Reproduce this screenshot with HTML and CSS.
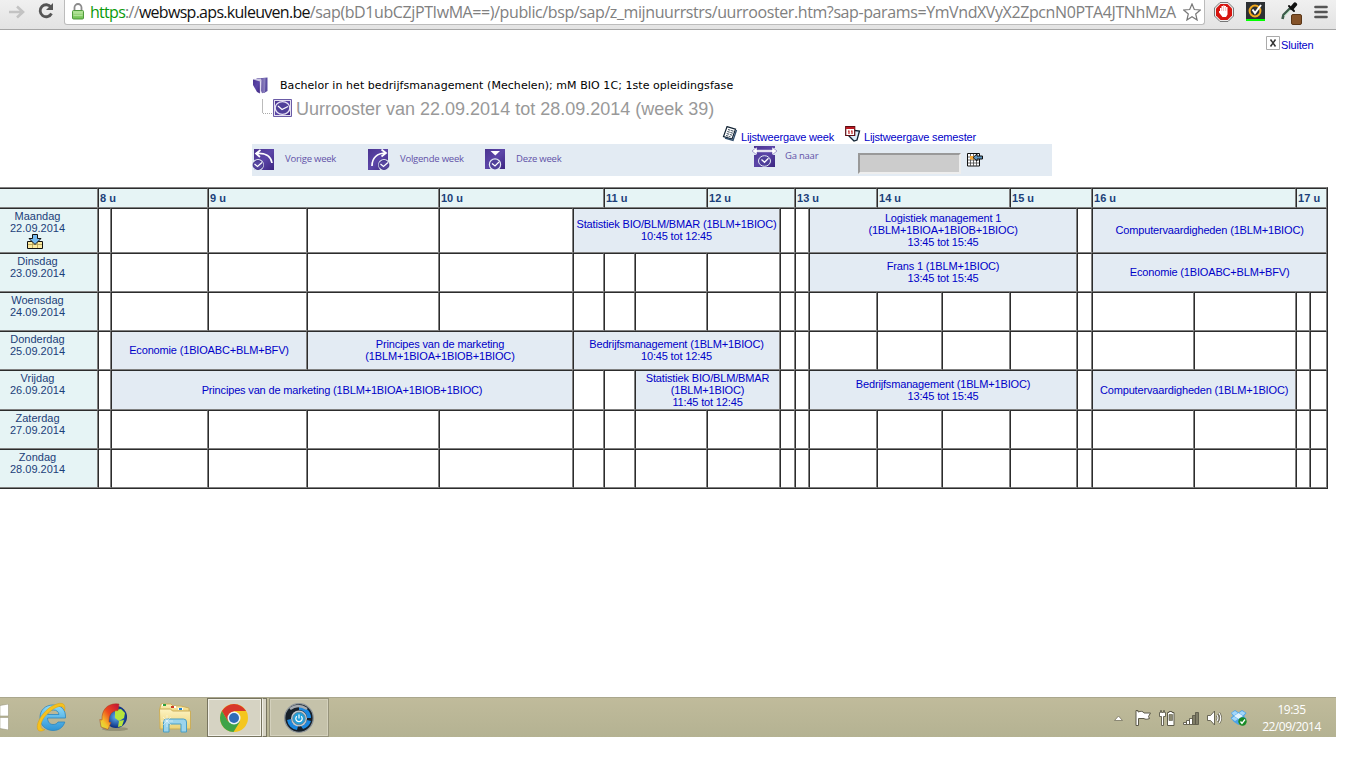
FILE: index.html
```html
<!DOCTYPE html>
<html lang="nl">
<head>
<meta charset="utf-8">
<title>Uurrooster</title>
<link rel="stylesheet" href="styles.css">
</head>
<body>
<svg class="defs" width="0" height="0" aria-hidden="true">
  <defs>
    <linearGradient id="purple" x1="0" y1="0" x2="1" y2="1"><stop offset="0" stop-color="#4a3390"/><stop offset=".5" stop-color="#5c46a8"/><stop offset="1" stop-color="#3c2580"/></linearGradient>
    <linearGradient id="spine" x1="0" y1="0" x2="1" y2="0"><stop offset="0" stop-color="#3f2b86"/><stop offset="1" stop-color="#9389c4"/></linearGradient>
    <linearGradient id="sky" x1="0" y1="0" x2="0" y2="1"><stop offset="0" stop-color="#8fdcfa"/><stop offset="1" stop-color="#2d94d6"/></linearGradient>
    <linearGradient id="paper" x1="0" y1="0" x2="0" y2="1"><stop offset="0" stop-color="#fdf3c1"/><stop offset="1" stop-color="#ecd277"/></linearGradient>
    <radialGradient id="globe"><stop offset="0" stop-color="#5db0f0"/><stop offset="1" stop-color="#0b2d80"/></radialGradient>
    <linearGradient id="swoosh" x1="1" y1="0" x2="0" y2="1"><stop offset="0" stop-color="#c2103a"/><stop offset=".45" stop-color="#ee4a1c"/><stop offset=".75" stop-color="#f5c32c"/><stop offset="1" stop-color="#c8ee4c"/></linearGradient>
    <linearGradient id="lockfill" x1="0" y1="0" x2="0" y2="1"><stop offset="0" stop-color="#b6e59a"/><stop offset="1" stop-color="#6cc04e"/></linearGradient>
  </defs>
</svg>

<header class="browser">
  <svg class="forward" width="18" height="16" viewBox="0 0 18 16"><path d="M0 8h13M8 2.500l6 5.500-6 5.500" fill="none" stroke="#c3c3c3" stroke-width="2.600"/></svg>
  <svg class="reload" width="18" height="18" viewBox="0 0 18 18"><path d="M14 5.200A6 6 0 1 0 14.500 11.500" fill="none" stroke="#555" stroke-width="2.800"/><path d="M16 1v7H9z" fill="#555"/></svg>
  <div class="omnibox">
    <svg class="lock" width="12" height="17" viewBox="0 0 12 17"><path d="M2.500 8V4.500a3.500 3.500 0 0 1 7 0V8" fill="none" stroke="#8b8b8b" stroke-width="1.800"/><rect x=".5" y="7.500" width="11" height="8.500" rx="1" fill="url(#lockfill)" stroke="#4f9a3c"/><path d="M1.500 10h9M1.500 12.500h9" stroke="#c9efb5" stroke-width=".6"/></svg>
    <span class="url"><span class="origin"><span class="scheme">https</span>://<span class="host">webwsp.aps.kuleuven.be</span></span>/sap(bD1ubCZjPTIwMA==)/public/bsp/sap/z_mijnuurrstrs/uurrooster.htm?sap-params=YmVndXVyX2ZpcnN0PTA4JTNhMzA</span>
    <svg class="star" width="18" height="18" viewBox="0 0 18 18"><path d="M9 1l2.300 5.500 6 .5-4.600 4 1.400 6L9 13.800 3.900 17l1.400-6L.7 7l6-.5z" fill="#fff" stroke="#777" stroke-width="1.200"/></svg>
  </div>
  <svg class="ext-block" width="20" height="20" viewBox="0 0 20 20"><path d="M6 .5h8L19.500 6v8L14 19.500H6L.5 14V6z" fill="#eee" stroke="#777"/><path d="M6.500 2h7L18 6.500v7L13.500 18h-7L2 13.500v-7z" fill="#d6150f"/><path d="M6 9V6h1.500V4H9V3.500h1.500V4H12v1h1.500v7.500L12 15H8.500L5 10.500V9z" fill="#fff"/><path d="M7.700 5v4M9.600 4v5M11.700 5v4" stroke="#e88" stroke-width=".6"/></svg>
  <svg class="ext-norton" width="19" height="19" viewBox="0 0 19 19"><path d="M0 0h19v17H0z" fill="#2d3033"/><circle cx="9" cy="9" r="5.400" fill="none" stroke="#f3a91d" stroke-width="2"/><path d="M6.500 7.500l2.500 3.500 6-8" fill="none" stroke="#fff" stroke-width="2"/><path d="M0 17h19v2H0z" fill="#0f0"/></svg>
  <svg class="ext-picker" width="22" height="24" viewBox="0 0 22 24"><path d="M1.500 17l1-4 7-7" stroke="#3f5c4c" stroke-width="2.600" fill="none"/><path d="M3 14l6-6" stroke="#9bd0ac"/><path d="M8 4l5 5" stroke="#111" stroke-width="2" stroke-linecap="round"/><path d="M11 6l3-3.500" stroke="#111" stroke-width="4.200" stroke-linecap="round"/><rect x="10.500" y="12.500" width="10" height="10" rx="1.500" fill="#855329" stroke="#5a3617"/></svg>
  <svg class="menu" width="14" height="14" viewBox="0 0 14 14"><path d="M1.500 2h11M1.500 7h11M1.500 12h11" stroke="#555" stroke-width="2.700" stroke-linecap="round"/></svg>
</header>

<main class="page">
  <div class="close">
    <svg width="14" height="14" viewBox="0 0 14 14"><path d="M.5.500h13v13H.5z" fill="#fff" stroke="#aaa"/><path d="M4.500 3.500l5 7M9.500 3.500l-5 7" stroke="#333" stroke-width="1.500"/></svg>
    <a>Sluiten</a>
  </div>

  <div class="programme">
    <svg width="18" height="17" viewBox="0 0 18 17"><path d="M5 1.500L15.500.500V14L12 16z" fill="#5a4ca0"/><path d="M4 1.800L13.500 1 13 15.500l-3 .8z" fill="url(#spine)"/><path d="M1 2l8-.5.500 2-.5 12z" fill="#cdc7e4"/><path d="M1 2.500l7 2V16.500L5 15 1 8z" fill="url(#purple)"/><path d="M8.300 4.500v12" stroke="#f0eef8" stroke-width=".7"/></svg>
    <span>Bachelor in het bedrijfsmanagement (Mechelen); mM BIO 1C; 1ste opleidingsfase</span>
  </div>
  <h1 class="title">
    <svg width="31" height="20" viewBox="0 0 31 20"><path d="M2 14.500h9" stroke="#aaa" stroke-dasharray="1 1"/><path d="M1.500 0v14" stroke="#bbb"/><path d="M12.500.500h18v17h-18z" fill="#e4e0f0" stroke="#6a5ba6"/><path d="M14 2h15v14H14z" fill="url(#purple)"/><ellipse cx="21.500" cy="9" rx="7.300" ry="6.300" fill="#50409a" stroke="#e8e3f5" stroke-width="1.300"/><path d="M17 7l4 3.500 6-3" stroke="#fff" stroke-width="1.200" fill="none"/></svg>
    <span>Uurrooster van 22.09.2014 tot 28.09.2014 (week 39)</span>
  </h1>

  <div class="lists">
    <svg width="16" height="16" viewBox="0 0 16 16"><path d="M5 .7l8.500 2.500L10 13 1.500 10.500z" fill="#fff" stroke="#123" stroke-width="1.200"/><path d="M14.500 4l-3.500 10.500-8-2.500" fill="none" stroke="#34506e" stroke-width="1.400"/><path d="M6 3.500l5.500 1.700M5.300 5.500l5.500 1.700M4.700 7.500l5.300 1.700M4 9.500l4.500 1.300" stroke="#234" stroke-width=".9" stroke-dasharray="2.500 .8"/></svg>
    <a class="list-week">Lijstweergave week</a>
    <svg width="17" height="16" viewBox="0 0 17 16"><path d="M7 4l8.500 1-2.500 9-3 1-5-5z" fill="#dceefa" stroke="#123" stroke-width="1.300"/><path d="M1.700.700h9v8.800h-9z" fill="#fff" stroke="#5c0d12" stroke-width="1.200"/><path d="M2 1h8.500v2H2z" fill="#bc1820"/><path d="M5 4.500v3.500M8 4.500v3.500M4 5h1M7 5h1" stroke="#b11" stroke-width="1.100"/></svg>
    <a>Lijstweergave semester</a>
  </div>

  <nav class="weeknav">
    <a class="prev"><svg width="23" height="23" viewBox="0 0 23 23"><path d="M2 1h20v21H2z" fill="url(#purple)"/><path d="M20 15C19 8 13 4.500 4 5.500M8.500 2L4 5.500l4 3.500" fill="none" stroke="#fff" stroke-width="1.700"/><circle cx="6" cy="17" r="6" fill="#e3ebf3"/><ellipse cx="6" cy="17" rx="4.900" ry="4.400" fill="#5747a0" stroke="#3d2b86"/><path d="M2.500 16l3 2.500 4.500-4" fill="none" stroke="#fff" stroke-width="1.200"/></svg><span>Vorige week</span></a>
    <a class="next"><svg width="23" height="23" viewBox="0 0 23 23"><path d="M0 1h20v21H0z" fill="url(#purple)"/><path d="M4 18C4 10 9 5 18 5M13.500 1.500l4.500 3.500-4.500 3.500" fill="none" stroke="#fff" stroke-width="1.700"/><circle cx="16" cy="17" r="6" fill="#e3ebf3"/><ellipse cx="16" cy="17" rx="4.900" ry="4.400" fill="#5747a0" stroke="#3d2b86"/><path d="M12.500 16l3 2.500 4.500-4" fill="none" stroke="#fff" stroke-width="1.200"/></svg><span>Volgende week</span></a>
    <a class="current"><svg width="21" height="23" viewBox="0 0 21 23"><path d="M0 1h20v20H0z" fill="url(#purple)"/><path d="M5.500 3h9.500l-4.700 4.500z" fill="#fff"/><circle cx="10" cy="16.500" r="5.600" fill="#50409a" stroke="#e3ebf3" stroke-width="1.200"/><path d="M7 15.500l3 2.500 4-4" fill="none" stroke="#fff" stroke-width="1.200"/></svg><span>Deze week</span></a>
    <a class="goto"><svg width="25" height="23" viewBox="0 0 25 23"><path d="M2 1h21v21H2z" fill="url(#purple)"/><path d="M0 3h4v7H0zM21 3h4v7h-4z" fill="#e3ebf3"/><path d="M0 6l5-4v2.800h15V2l5 4-5 4V7.200H5V10z" fill="#fff" stroke="#5e4da6" stroke-width=".5"/><ellipse cx="12.500" cy="16" rx="6" ry="5.300" fill="#50409a" stroke="#e3ebf3"/><path d="M9.500 14.500l3 2.800 4-4" fill="none" stroke="#fff" stroke-width="1.300"/></svg><span>Ga naar</span></a>
    <input class="date" type="text" aria-label="Datum">
    <svg class="picker" width="16" height="16" viewBox="0 0 16 16"><path d="M.5 1.500h12v12.500H.5z" fill="#fff" stroke="#111"/><path d="M3.500 2v12M6.500 2v12M9.500 2v12M1 5h11M1 8h11M1 11h11" stroke="#444" stroke-width=".8"/><path d="M3 4h4v3.500H3z" fill="#f5a735"/><path d="M6 5.500l4-3.500v2h5.500v3H10v2z" fill="#5d93bd" stroke="#111"/></svg>
  </nav>

  <table class="roster">
    <colgroup><col class="w98"><col class="w13"><col class="w97"><col class="w99"><col class="w132"><col class="w134"><col class="w31"><col class="w31"><col class="w72"><col class="w73"><col class="w15"><col class="w14"><col class="w68"><col class="w65"><col class="w68"><col class="w67"><col class="w15"><col class="w102"><col class="w102"><col class="w14"><col class="w17"></colgroup>
    <thead>
      <tr><th></th><th colspan="2">8 u</th><th colspan="2">9 u</th><th colspan="2">10 u</th><th colspan="2">11 u</th><th colspan="2">12 u</th><th colspan="2">13 u</th><th colspan="2">14 u</th><th colspan="2">15 u</th><th colspan="2">16 u</th><th colspan="2">17 u</th></tr>
    </thead>
    <tbody>
      <tr class="monday"><th>Maandag<br>22.09.2014<br><svg width="16" height="15" viewBox="0 0 16 15"><path d="M.5 7.500h15v7H.5z" fill="#fbeaa0" stroke="#111"/><path d="M5.500 8v6M10.500 8v6M1 10.500h14" stroke="#b39c52" stroke-width=".8"/><path d="M5.500.500h5v4h3.500L8 10.500 2 4.500h3.500z" fill="#74b9ef" stroke="#111"/></svg></th><td></td><td></td><td></td><td></td><td></td><td class="event" colspan="4">Statistiek BIO/BLM/BMAR (1BLM+1BIOC)<br>10:45 tot 12:45</td><td></td><td></td><td class="event" colspan="4">Logistiek management 1<br>(1BLM+1BIOA+1BIOB+1BIOC)<br>13:45 tot 15:45</td><td></td><td class="event" colspan="4">Computervaardigheden (1BLM+1BIOC)</td></tr>
      <tr><th>Dinsdag<br>23.09.2014</th><td></td><td></td><td></td><td></td><td></td><td></td><td></td><td></td><td></td><td></td><td></td><td class="event" colspan="4">Frans 1 (1BLM+1BIOC)<br>13:45 tot 15:45</td><td></td><td class="event" colspan="4">Economie (1BIOABC+BLM+BFV)</td></tr>
      <tr><th>Woensdag<br>24.09.2014</th><td></td><td></td><td></td><td></td><td></td><td></td><td></td><td></td><td></td><td></td><td></td><td></td><td></td><td></td><td></td><td></td><td></td><td></td><td></td><td></td></tr>
      <tr><th>Donderdag<br>25.09.2014</th><td></td><td class="event" colspan="2">Economie (1BIOABC+BLM+BFV)</td><td class="event" colspan="2">Principes van de marketing<br>(1BLM+1BIOA+1BIOB+1BIOC)</td><td class="event" colspan="4">Bedrijfsmanagement (1BLM+1BIOC)<br>10:45 tot 12:45</td><td></td><td></td><td></td><td></td><td></td><td></td><td></td><td></td><td></td><td></td><td></td></tr>
      <tr class="friday"><th>Vrijdag<br>26.09.2014</th><td></td><td class="event" colspan="4">Principes van de marketing (1BLM+1BIOA+1BIOB+1BIOC)</td><td></td><td></td><td class="event" colspan="2">Statistiek BIO/BLM/BMAR<br>(1BLM+1BIOC)<br>11:45 tot 12:45</td><td></td><td></td><td class="event" colspan="4">Bedrijfsmanagement (1BLM+1BIOC)<br>13:45 tot 15:45</td><td></td><td class="event" colspan="2">Computervaardigheden (1BLM+1BIOC)</td><td></td><td></td></tr>
      <tr><th>Zaterdag<br>27.09.2014</th><td></td><td></td><td></td><td></td><td></td><td></td><td></td><td></td><td></td><td></td><td></td><td></td><td></td><td></td><td></td><td></td><td></td><td></td><td></td><td></td></tr>
      <tr><th>Zondag<br>28.09.2014</th><td></td><td></td><td></td><td></td><td></td><td></td><td></td><td></td><td></td><td></td><td></td><td></td><td></td><td></td><td></td><td></td><td></td><td></td><td></td><td></td></tr>
    </tbody>
  </table>
</main>

<footer class="taskbar">
  <svg class="start" width="9" height="26" viewBox="0 0 9 26"><path d="M0 1.500L8.500 0v12H0zM0 13.500h8.500V26L0 24.500z" fill="#fff" stroke="#8f8d72" stroke-width=".5"/></svg>
  <svg class="ie" width="32" height="32" viewBox="0 0 32 32"><path d="M29.500 17H11.500c.3 4.500 2.500 6.500 5.500 6.500 2.500 0 4-.8 5-2.500h6.800C27 26.500 23 29.500 17 29.500 9.500 29.500 4 24 4 16.500S9.500 4 17 4c8 0 13 4.500 12.500 13zM11.500 13.500H23C22.500 10.500 20.500 9 17.300 9s-5.200 1.500-5.800 4.500z" fill="url(#sky)" stroke="#2c86bf" stroke-width=".8"/><path d="M28.500 10C31-.5 22 1 13 7 5 13.500-1 24 2 29c1.500 2 5 1 7-.5-6 .5-6-8.500 4-17C20 5 28 2.500 28.500 10z" fill="#f6c11d" stroke="#d79e12" stroke-width=".5"/></svg>
  <svg class="idm" width="30" height="30" viewBox="0 0 30 30"><ellipse cx="16" cy="26" rx="13" ry="2" fill="#86836a" opacity=".7"/><circle cx="17" cy="14" r="11" fill="url(#globe)"/><path d="M16 7l6-1 4 4-1 5-5 3-4-3zM20 18l5-1-2 6-4 1z" fill="#b6e43d"/><path d="M17 .8C8 1 2.500 7 3 17L.8 16.500 2 24l7 2.500 3-7-2-.5c0-7 2-11 9-11.500L20 1z" fill="url(#swoosh)" stroke="#a83d1a" stroke-width=".5"/></svg>
  <svg class="explorer" width="32" height="30" viewBox="0 0 32 30"><path d="M1 5l1-4h10l2 2h8l8 2v4H1z" fill="url(#paper)" stroke="#cbae5a"/><path d="M3 2h4M12 4h5M19 6h5" stroke="#fff" stroke-width="2"/><path d="M4 2h3" stroke="#2ca13e" stroke-width="2"/><path d="M12 4h3" stroke="#cf3b22" stroke-width="2"/><path d="M20 6h3" stroke="#2284cd" stroke-width="2"/><path d="M.5 6h11l2 2h18v18H1z" fill="url(#paper)" stroke="#cbae5a"/><path d="M4.500 29V19q0-3 3-3h17q3 0 3 3v10H22v-8H10v8z" fill="#9bd4ec" stroke="#4b9fc5"/><path d="M8 12v12M2 18h12M4 14l8 8M12 14l-8 8" stroke="#fff" stroke-width=".6" opacity=".8"/></svg>
  <div class="task active">
    <svg width="28" height="28" viewBox="0 0 28 28"><circle cx="14" cy="14" r="14" fill="#f4c61e"/><path d="M14 7h12.100A14 14 0 0 0 1.900 7l6 10.500z" fill="#d8372a"/><path d="M1.900 7A14 14 0 0 0 13.500 28L20 17.500H8z" fill="#3fa348"/><circle cx="14" cy="14" r="6.500" fill="#eef4fb"/><circle cx="14" cy="14" r="5" fill="#2e6cb8"/></svg>
  </div>
  <div class="stack"></div>
  <div class="task">
    <svg width="30" height="30" viewBox="0 0 30 30"><circle cx="15" cy="15" r="14.300" fill="#16202a" stroke="#8e9599" stroke-width="1.300"/><path d="M15 3a12 12 0 0 1 12 12h-4a8 8 0 0 0-8-8zM3 17a12 12 0 0 0 10 10l1-4a8 8 0 0 1-7-7zM27 18a12 12 0 0 1-8 8l-2-3a8 8 0 0 0 6-6z" fill="#1a87df"/><path d="M6 6q8-6 17 0" stroke="#a5abb0" stroke-width="2.500" fill="none"/><circle cx="15" cy="15.500" r="8" fill="#c0c5ca"/><circle cx="15" cy="15.500" r="6.200" fill="#219ed9" stroke="#5d88a0"/><path d="M12.800 13.200a3.200 3.200 0 1 0 4.400 0M15 11.500v4" stroke="#fff" fill="none" stroke-width="1.200"/></svg>
  </div>
  <div class="tray">
    <svg class="up" width="9" height="6" viewBox="0 0 9 6"><path d="M.5 5.500L4.500 1l4 4.500z" fill="#fff" stroke="#77745f" stroke-width=".8"/></svg>
    <svg class="flag" width="17" height="16" viewBox="0 0 17 16"><path d="M1 .5h2V2c3-1 5-1 6 1h6.500l-2 3.500 1 2C12 9.500 10 9.500 9 8.500H3.500V15.500H1z" fill="#fff" stroke="#5c5a4a"/></svg>
    <svg class="power" width="16" height="16" viewBox="0 0 16 16"><path d="M1.500 .5h1v2h2v-2h1v2h1v4h-2v9h-2v-9h-2v-4h1z" fill="#fff" stroke="#5c5a4a" stroke-width=".9"/><path d="M8.500 2.500H10v-1h3v1h2v13H8.500z" fill="#fff" stroke="#5c5a4a"/><path d="M10 4.500h3.500v6H10z" fill="#8d8b73" stroke="#5c5a4a" stroke-width=".6"/></svg>
    <svg class="signal" width="16" height="13" viewBox="0 0 16 13"><path d="M.5 10.500h3v2h-3zM3.500 8.500h3v4h-3zM6.500 6.500h3v6h-3z" fill="#fff" stroke="#5c5a4a" stroke-width=".9"/><path d="M9.500 3.500h3v9h-3zM12.500 .5h3v12h-3z" fill="#807e68" stroke="#5c5a4a" stroke-width=".9"/></svg>
    <svg class="volume" width="16" height="16" viewBox="0 0 16 16"><path d="M.5 5.500h3l4-4.500v14l-4-4.500h-3z" fill="#fff" stroke="#5c5a4a" stroke-width=".9"/><path d="M10 5q2 3 0 6M12 3q3.500 5 0 10" fill="none" stroke="#5c5a4a" stroke-width="2.400"/><path d="M10 5q2 3 0 6M12 3q3.500 5 0 10" fill="none" stroke="#fff" stroke-width="1.200"/></svg>
    <svg class="dropbox" width="17" height="16" viewBox="0 0 17 16"><path d="M1 3l4-3 3.500 2.500L12 0l4.500 3L14 6l2.500 3-4 2.500L8.500 15 4 12 .5 8 3 6z" fill="#4ba3e8"/><path d="M8.500 3L13 6 8.500 9 4 6z" fill="#e1f2fd"/><path d="M1.500 3L5 1l3 2-4 2.500zM15.500 3L12 1 9 3l4 2.500zM1.500 8.500L4 6.500 8 9l-3 2z" fill="#a4d6f8"/><circle cx="12.500" cy="11.500" r="4.200" fill="#188b26"/><path d="M10.500 11.500l1.500 2 3-4" stroke="#fff" stroke-width="1.300" fill="none"/></svg>
    <div class="clock">19:35<br>22/09/2014</div>
  </div>
</footer>
</body>
</html>
```
FILE: styles.css
```css
* { box-sizing: border-box; }
body { margin: 0; background: #fff; font: 11px/12px "Liberation Sans", Arial, sans-serif; width: 1366px; height: 768px; overflow: hidden; }
svg { display: block; flex: none; }
.defs { position: absolute; }
a { color: #0000c8; letter-spacing: -.16px; }

.browser { display: flex; width: 1336px; height: 30px; background: linear-gradient(#f0f0f0, #e3e3e3); border-bottom: 1px solid #a6a6a6; }
.forward { margin: 4px 0 0 9px; }
.reload { margin: 2px 0 0 10px; }
.omnibox { display: flex; width: 1141px; height: 25px; margin-left: 9px; background: #fff; border: 1px solid #bcbcbc; border-top: 0; border-radius: 0 0 3px 3px; }
.lock { margin: 3px 0 0 7px; }
.url { width: 1093px; margin-left: 6px; font: 16px/24px "Open Sans", sans-serif; color: #808080; letter-spacing: -.4px; white-space: nowrap; }
.origin { letter-spacing: -.71px; }
.scheme { color: #0b9a0b; }
.host { color: #111; }
.star { margin: 3px 0 0 0; }
.ext-block { margin: 2px 0 0 9px; }
.ext-norton { margin: 2px 0 0 12px; }
.ext-picker { margin: 2px 0 0 16px; }
.menu { margin: 5px 0 0 11px; }

.page { height: 667px; overflow: hidden; }
.close { display: flex; gap: 1px; height: 45px; padding: 6px 0 0 1266px; }
.close a { margin-top: 3px; }
.programme { display: flex; gap: 10px; height: 22px; margin-left: 252px; padding-top: 2px; font: 11px/18px "DejaVu Sans", Verdana, sans-serif; letter-spacing: .055px; }
.title { display: flex; gap: 4px; height: 29px; margin: 0 0 0 261px; padding-top: 2px; font-size: 18px; line-height: 20px; font-weight: 400; color: #999; }
.lists { display: flex; height: 18px; margin-left: 722px; }
.lists a { margin: 5px 0 0 3px; white-space: nowrap; }
.lists .list-week { width: 103px; }

.weeknav { display: flex; width: 800px; height: 32px; margin-left: 252px; background: #e3ebf3; }
.weeknav a { display: flex; align-items: flex-start; padding-top: 4px; font: 9.500px/12px "Open Sans", sans-serif; letter-spacing: -.23px; color: #6252a8; }
.weeknav a span { margin-top: 5px; white-space: nowrap; }
.prev { gap: 10px; width: 116px; }
.next { gap: 9px; width: 117px; }
.current { gap: 10px; width: 267px; }
.weeknav .goto { gap: 8px; width: 106px; padding-top: 1px; }
.date { width: 103px; height: 21px; margin-top: 9px; background: #ccc; border: 2px solid; border-color: #999 #eee #eee #999; }
.picker { margin: 8px 0 0 6px; }

.roster { table-layout: fixed; width: 1328px; margin-top: 11px; border-collapse: separate; border-spacing: 0; border-top: 1px solid #808080; border-right: 1px solid #2c2c2c; border-bottom: 1px solid #2c2c2c; }
.roster th, .roster td { padding: 0; border: 1px solid; border-color: #2c2c2c #808080 #808080 #2c2c2c; white-space: nowrap; text-align: center; }
.roster th { background: #e6f4f5; color: #1b4079; }
.roster thead th { height: 20px; padding-left: 1px; text-align: left; }
.roster th:first-child { border-left: 0; }
.roster tbody th { padding: 1px 22px 0 0; font-weight: 400; vertical-align: top; }
.roster tbody tr { height: 39px; }
.roster tbody .monday { height: 45px; }
.roster tbody .friday { height: 40px; }
.roster tbody th svg { margin: 0 auto -10px 27px; }
.roster .event { padding-bottom: 2px; background: #e3ebf3; color: #0000c8; letter-spacing: -.16px; }
.roster .friday .event { padding-bottom: 0; }
.w13 { width: 13px; } .w14 { width: 14px; } .w15 { width: 15px; } .w17 { width: 17px; }
.w31 { width: 31px; } .w65 { width: 65px; } .w67 { width: 67px; } .w68 { width: 68px; }
.w72 { width: 72px; } .w73 { width: 73px; } .w97 { width: 97px; } .w98 { width: 98px; }
.w99 { width: 99px; } .w102 { width: 102px; } .w132 { width: 132px; } .w134 { width: 134px; }

.taskbar { display: flex; align-items: flex-start; width: 1336px; height: 40px; background: linear-gradient(#c0bb9b, #b4b292); border-top: 1px solid #aaa78d; }
.start { margin-top: 6px; }
.ie { margin: 3px 0 0 27px; }
.idm { margin: 5px 0 0 31px; }
.explorer { margin: 5px 0 0 30px; }
.task { display: flex; align-items: center; justify-content: center; width: 60px; height: 39px; background: #c5c2aa; border: 1px solid #96937b; box-shadow: inset 0 0 0 1px #d4d1bd; }
.task.active { width: 55px; padding-right: 2px; margin-left: 16px; background: #d6d3c3; border-color: #77745f; box-shadow: inset 0 0 0 1px #f1f0e7; }
.stack { width: 5px; height: 39px; margin-right: 2px; background: #d6d3c3; border: 1px solid #77745f; border-left-color: #f1f0e7; }
.tray { display: flex; margin-left: auto; }
.up { margin: 17px 0 0; }
.flag { margin: 12px 0 0 12px; }
.power { margin: 12px 0 0 7px; }
.signal { margin: 14px 0 0 8px; }
.volume { margin: 12px 0 0 8px; }
.dropbox { margin: 12px 0 0 7px; }
.clock { width: 89px; padding: 3px 0 0 0; font: 12px/17px "Open Sans", sans-serif; letter-spacing: -.5px; color: #fff; text-align: center; }
```
